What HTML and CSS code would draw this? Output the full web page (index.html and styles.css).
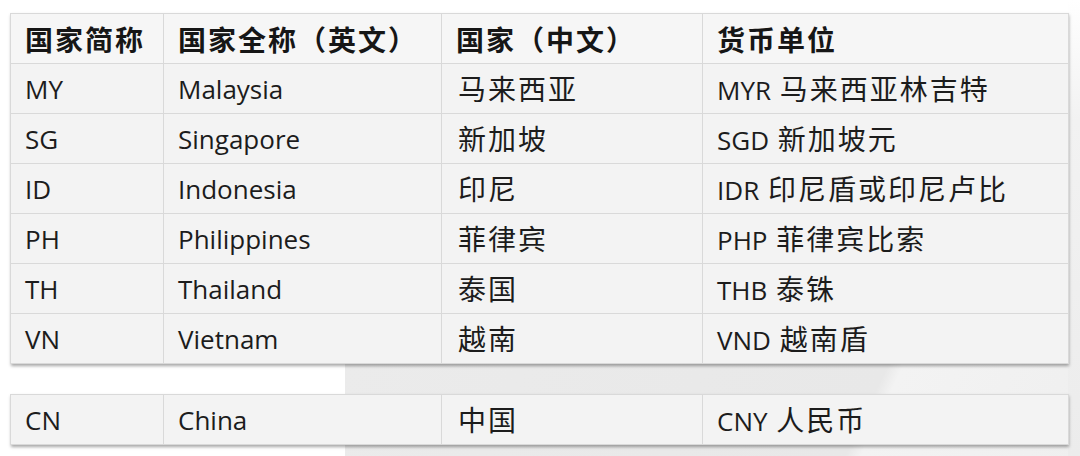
FILE: index.html
```html
<!DOCTYPE html>
<html lang="zh-CN">
<head>
<meta charset="utf-8">
<link rel="stylesheet" href="styles.css">
</head>
<body>
<div class="page">
  <div class="card">
    <table class="grid">
      <colgroup><col class="c1"><col class="c2"><col class="c3"><col class="c4"></colgroup>
      <thead>
        <tr><th>国家简称</th><th>国家全称（英文）</th><th>国家（中文）</th><th>货币单位</th></tr>
      </thead>
      <tbody>
        <tr><td>MY</td><td>Malaysia</td><td><span class="zh">马来西亚</span></td><td>MYR <span class="zh">马来西亚林吉特</span></td></tr>
        <tr><td>SG</td><td>Singapore</td><td><span class="zh">新加坡</span></td><td>SGD <span class="zh">新加坡元</span></td></tr>
        <tr><td>ID</td><td>Indonesia</td><td><span class="zh">印尼</span></td><td>IDR <span class="zh">印尼盾或印尼卢比</span></td></tr>
        <tr><td>PH</td><td>Philippines</td><td><span class="zh">菲律宾</span></td><td>PHP <span class="zh">菲律宾比索</span></td></tr>
        <tr><td>TH</td><td>Thailand</td><td><span class="zh">泰国</span></td><td>THB <span class="zh">泰铢</span></td></tr>
        <tr><td>VN</td><td>Vietnam</td><td><span class="zh">越南</span></td><td>VND <span class="zh">越南盾</span></td></tr>
      </tbody>
    </table>
  </div>
  <div class="card">
    <table class="grid">
      <colgroup><col class="c1"><col class="c2"><col class="c3"><col class="c4"></colgroup>
      <tbody>
        <tr><td>CN</td><td>China</td><td><span class="zh">中国</span></td><td>CNY <span class="zh">人民币</span></td></tr>
      </tbody>
    </table>
  </div>
</div>
</body>
</html>
```

FILE: styles.css
```css
html, body {
  margin: 0;
  padding: 0;
}
body {
  width: 1080px;
  height: 456px;
  overflow: hidden;
  background-color: #ffffff;
  background-image:
    linear-gradient(to bottom, #ffffff 0px, #f2f2f2 120px, #ececec 456px),
    linear-gradient(115deg, #ebebeb 0%, #e8e8e8 70%, #f3f3f3 72%, #efefef 100%);
  background-repeat: no-repeat;
  background-position: 1068px 0, 345px 356px;
  background-size: 12px 456px, 735px 100px;
  font-family: "Open Sans", "Noto Sans CJK SC", sans-serif;
  color: #1c1c1c;
}
.page {
  padding: 13px 0 0 10px;
  display: flex;
  flex-direction: column;
  gap: 30px;
}
.card {
  width: 1058px;
  box-shadow: 1px 2px 3px rgba(0, 0, 0, 0.35);
}
.grid {
  width: 100%;
  border-collapse: collapse;
  table-layout: fixed;
  background: #f3f3f3;
}
.c1 { width: 153px; }
.c2 { width: 278px; }
.c3 { width: 261px; }
.c4 { width: 366px; }
.grid th, .grid td {
  height: 49px;
  padding: 0 0 0 14px;
  border: 1px solid #d9d9d9;
  text-align: left;
  vertical-align: middle;
  white-space: nowrap;
  font-size: 26px;
  font-weight: 400;
  line-height: 1;
}
.grid th {
  font-family: "Noto Sans CJK SC", sans-serif;
  font-weight: 700;
  font-size: 28px;
  letter-spacing: 2px;
  background: #f6f6f6;
  color: #161616;
}
.zh {
  font-family: "Noto Sans CJK SC", sans-serif;
  font-size: 28px;
  letter-spacing: 2px;
  margin-left: 2px;
}
```
